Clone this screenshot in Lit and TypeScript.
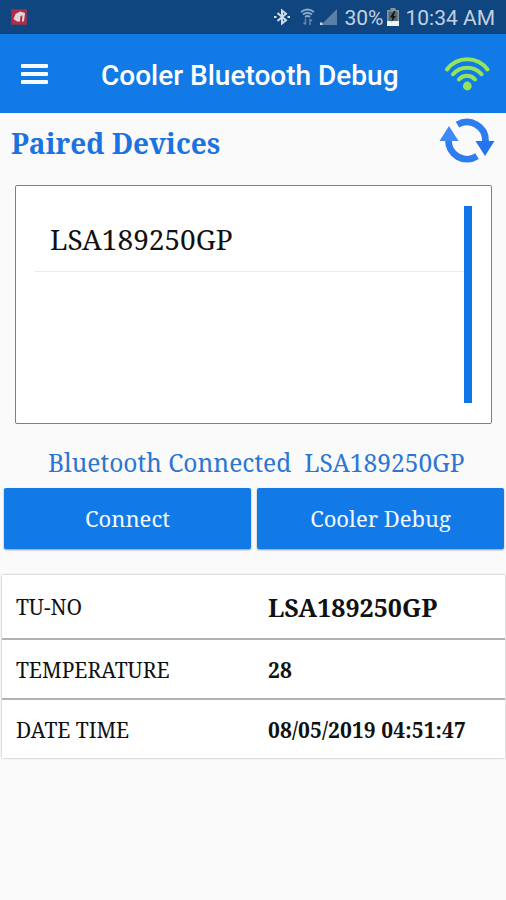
import { LitElement, html, css } from "lit";
import { customElement } from "lit/decorators.js";

@customElement("app-status-bar")
class AppStatusBar extends LitElement {
  static styles = css`
    :host {
      display: flex;
      align-items: center;
      height: 34px;
      box-sizing: border-box;
      padding: 0 11px;
      background: #0f467f;
      color: #c3d1e2;
      font: 21px/34px Roboto, sans-serif;
    }
    svg { display: block; flex: none; }
    .spacer { flex: 1; }
    .bt { margin-right: 9px; }
    .wifi { margin-right: 5px; }
    .signal { margin-right: 7px; }
    .battery { margin: 0 6px 0 4px; }
    .pct, .clock { white-space: pre; padding-top: 2px; }
  `;
  render() {
    return html`
      <svg width="16" height="16" viewBox="0 0 16 16">
        <rect x=".5" y=".5" width="15" height="15" fill="#b52c42" stroke="#7d3558" />
        <path d="M2.500 10 4.500 5 9 2.500 14 4 13 12 11 13 11.500 6 9.500 7.500 9 12.500 6 12.500Z" fill="#dcd8de" />
        <path d="M10.200 7.500V13" stroke="#b52c42" stroke-width="1" />
      </svg>
      <span class="spacer"></span>
      <svg class="bt" width="18" height="18" viewBox="0 0 18 18" fill="none" stroke="#d2dde9" stroke-width="2">
        <path d="M4.500 5 13 12.300 9 15.500V2.500l4 3.200-8.500 7.300" />
        <path d="M1 9h2.500M14.500 9H17" stroke-width="2" />
      </svg>
      <svg class="wifi" width="15" height="18" viewBox="0 0 15 18" fill="none" stroke="#8ca9c4" stroke-width="1.800">
        <path d="M1 4Q7.500-1 14 4M3 6.500Q7.500 3 12 6.500M5 9Q7.500 7 10 9" />
        <path d="M5.500 10.500v6M3.500 14.500l2 2M10 17v-6M10 11l2 2" stroke="#6688aa" stroke-width="1.500" />
      </svg>
      <svg class="signal" width="17" height="18" viewBox="0 0 17 18">
        <path d="M17 1V17H1Z" fill="#5b7fa5" />
        <path d="M0 14.500h2.500V17H0Z" fill="#c9d6e4" />
      </svg>
      <span class="pct">30%</span>
      <svg class="battery" width="12" height="18" viewBox="0 0 12 18">
        <path d="M3.500 0h5v2H12v16H0V2h3.500Z" fill="#8195a4" />
        <path d="M1.500 3.500h9V13h-9Z" fill="#566873" />
        <path d="M0 13h12v5H0Z" fill="#edf1f3" />
        <path d="M7 3 3 9.500h2.500L4.500 14 9 8H6.500L8.500 3Z" fill="#10151a" />
      </svg>
      <span class="clock">10:34 AM</span>
    `;
  }
}

@customElement("app-toolbar")
class AppToolbar extends LitElement {
  static styles = css`
    :host {
      display: flex;
      align-items: center;
      height: 79px;
      box-sizing: border-box;
      padding: 0 16px 0 21px;
      background: #117ae7;
      color: #fff;
    }
    svg { display: block; flex: none; }
    .menu { display: grid; gap: 4px; width: 27px; margin: 0 53px 0 0; }
    .menu i { height: 4px; border-radius: 1px; background: #f6faff; }
    h1 {
      flex: 1;
      margin: 4px 0 0;
      font: 500 28px/36px Roboto, sans-serif;
      white-space: nowrap;
    }
  `;
  render() {
    return html`
      <div class="menu"><i></i><i></i><i></i></div>
      <h1>Cooler Bluetooth Debug</h1>
      <svg width="46" height="36" viewBox="0 0 46 36" fill="none" stroke="#96e45a" stroke-width="4" stroke-linecap="round">
        <path d="M3 13.500A25 25 0 0 1 43.500 13.500M9 18.300A18.800 18.800 0 0 1 37.500 18.300M15 23.500A10.500 10.500 0 0 1 31 23.500" />
        <circle cx="23.300" cy="30" r="4.400" fill="#96e45a" stroke="none" />
      </svg>
    `;
  }
}

@customElement("app-root")
class AppRoot extends LitElement {
  static styles = css`
    :host {
      display: flex;
      flex-direction: column;
      height: 900px;
      overflow: hidden;
      background: #fafafa;
      color: #111;
      font-family: "Noto Serif", "DejaVu Serif Condensed", "DejaVu Serif", serif;
      white-space: pre;
    }
    .heading {
      display: flex;
      justify-content: space-between;
      height: 59px;
      padding: 0 11px;
      color: #1a73e0;
    }
    h2 { margin: 12px 0 0; font-size: 28px; line-height: 36px; font-weight: 700; }
    svg { display: block; margin-top: 5px; }
    .devices {
      display: flex;
      height: 239px;
      margin: 13px 14px 0 15px;
      box-sizing: border-box;
      padding: 20px 19px;
      border: 1px solid #4c86e0;
      border-radius: 2px;
      background: #fff;
    }
    .list { flex: 1; }
    .device {
      height: 66px;
      box-sizing: border-box;
      padding: 14px 0 0 15px;
      border-bottom: 1px solid #eaeaea;
      font-size: 28px;
      line-height: 38px;
    }
    .thumb { width: 8px; background: #0f76e8; }
    .status {
      height: 64px;
      box-sizing: border-box;
      padding: 23px 0 0 48px;
      font-size: 24.600px;
      line-height: 32px;
      color: #2b76d2;
    }
    .actions { display: grid; grid-template-columns: 1fr 1fr; gap: 6px; padding: 0 2px 0 4px; }
    .action {
      height: 61px;
      border-radius: 2px;
      background: #117ae7;
      box-shadow: 0 1px 2px #0006;
      color: #f3f8ff;
      font-size: 22px;
      line-height: 61px;
      text-align: center;
    }
    .readings {
      margin: 26px 1px 0 2px;
      background: #fff;
      box-shadow: 0 0 2px #0005;
    }
    .row {
      display: grid;
      grid-template-columns: 252px 1fr;
      align-items: center;
      height: 60px;
      box-sizing: border-box;
      padding: 2px 0 0 14px;
      font-size: 21px;
      border-bottom: 2px solid #b3b3b3;
    }
    .row:first-child { height: 65px; padding-top: 0; }
    .row:last-child { height: 58px; border: 0; }
    .row b { letter-spacing: 0.080px; }
    .row b.big { font-size: 25px; letter-spacing: 0; }
  `;
  render() {
    return html`<app-status-bar></app-status-bar><app-toolbar></app-toolbar><div class="heading"><h2>Paired Devices</h2><svg width="56" height="46" viewBox="0 0 56 46">
        <path d="M18.500 6.700A18.500 18.500 0 0 1 46.500 23" fill="none" stroke="#2d7cf0" stroke-width="6.800" />
        <path d="M38 38.200A18.500 18.500 0 0 1 9.500 22" fill="none" stroke="#2d7cf0" stroke-width="6.800" />
        <path d="M.5 23 10 8 19.500 23Z" fill="#3d8af4" />
        <path d="M36.500 23 46 38 55.500 23Z" fill="#2474ee" />
      </svg></div><div class="devices"><div class="list"><div class="device"><span>LSA189250GP</span></div></div><div class="thumb"></div></div><div class="status"><span>Bluetooth Connected  LSA189250GP</span></div><div class="actions"><div class="action"><span>Connect</span></div><div class="action"><span>Cooler Debug</span></div></div><div class="readings"><div class="row"><span>TU-NO</span><b class="big">LSA189250GP</b></div><div class="row"><span>TEMPERATURE</span><b>28</b></div><div class="row"><span>DATE TIME</span><b>08/05/2019 04:51:47</b></div></div>`;
  }
}
